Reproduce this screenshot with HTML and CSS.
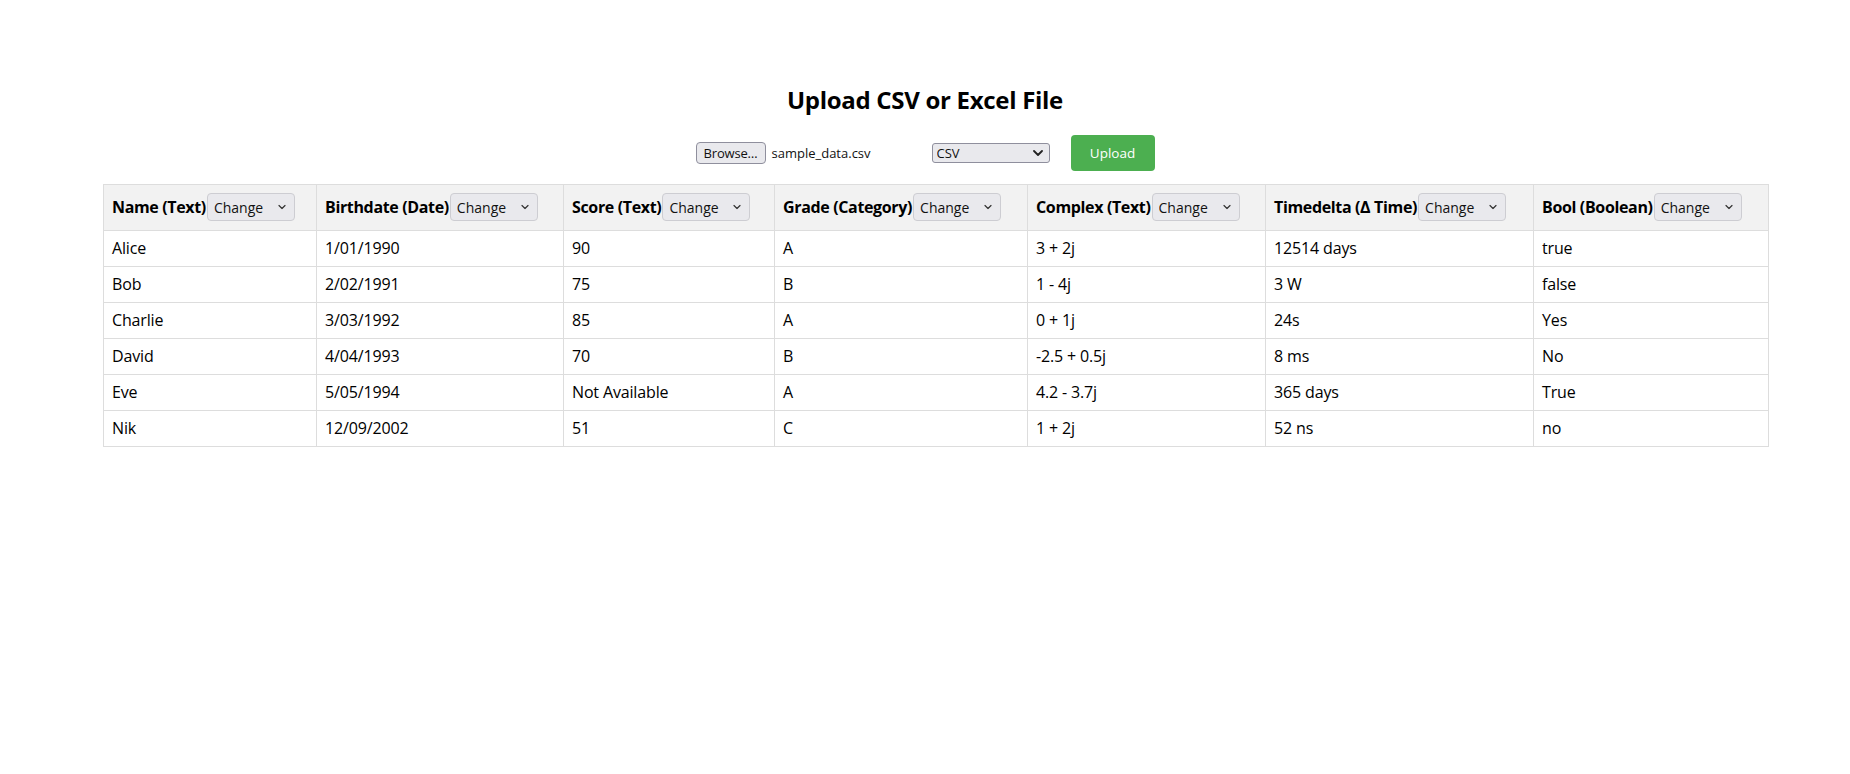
FILE: index.html
```html
<!DOCTYPE html>
<html lang="en">
<head>
<meta charset="utf-8">
<title>Upload CSV or Excel File</title>
<link rel="stylesheet" href="styles.css">
</head>
<body>
<header class="top">
  <h1 class="title">Upload CSV or Excel File</h1>
  <form class="controls">
    <div class="file-widget">
      <button type="button" class="browse">Browse…</button>
      <span class="file-name">sample_data.csv</span>
    </div>
    <span class="sel sel-type">
      <select class="type-select"><option>CSV</option><option>Excel</option></select>
      <svg class="chev chev-bold" width="10" height="6" viewBox="0 0 10 6"><path d="M1 1 L5 5 L9 1" fill="none" stroke="#222" stroke-width="1.8" stroke-linecap="round" stroke-linejoin="round"/></svg>
    </span>
    <button type="button" class="upload">Upload</button>
  </form>
</header>
<main class="data">
  <table class="grid">
    <colgroup>
      <col class="c1"><col class="c2"><col class="c3"><col class="c4"><col class="c5"><col class="c6"><col class="c7">
    </colgroup>
    <thead>
      <tr>
        <th><div class="th-in">Name (Text)<span class="sel"><select class="chg"><option>Change</option></select><svg class="chev" width="8" height="5" viewBox="0 0 8 5"><path d="M1 1 L4 4 L7 1" fill="none" stroke="#333" stroke-width="1.2" stroke-linecap="round" stroke-linejoin="round"/></svg></span></div></th>
        <th><div class="th-in">Birthdate (Date)<span class="sel"><select class="chg"><option>Change</option></select><svg class="chev" width="8" height="5" viewBox="0 0 8 5"><path d="M1 1 L4 4 L7 1" fill="none" stroke="#333" stroke-width="1.2" stroke-linecap="round" stroke-linejoin="round"/></svg></span></div></th>
        <th><div class="th-in">Score (Text)<span class="sel"><select class="chg"><option>Change</option></select><svg class="chev" width="8" height="5" viewBox="0 0 8 5"><path d="M1 1 L4 4 L7 1" fill="none" stroke="#333" stroke-width="1.2" stroke-linecap="round" stroke-linejoin="round"/></svg></span></div></th>
        <th><div class="th-in">Grade (Category)<span class="sel"><select class="chg"><option>Change</option></select><svg class="chev" width="8" height="5" viewBox="0 0 8 5"><path d="M1 1 L4 4 L7 1" fill="none" stroke="#333" stroke-width="1.2" stroke-linecap="round" stroke-linejoin="round"/></svg></span></div></th>
        <th><div class="th-in">Complex (Text)<span class="sel"><select class="chg"><option>Change</option></select><svg class="chev" width="8" height="5" viewBox="0 0 8 5"><path d="M1 1 L4 4 L7 1" fill="none" stroke="#333" stroke-width="1.2" stroke-linecap="round" stroke-linejoin="round"/></svg></span></div></th>
        <th><div class="th-in">Timedelta (Δ Time)<span class="sel"><select class="chg"><option>Change</option></select><svg class="chev" width="8" height="5" viewBox="0 0 8 5"><path d="M1 1 L4 4 L7 1" fill="none" stroke="#333" stroke-width="1.2" stroke-linecap="round" stroke-linejoin="round"/></svg></span></div></th>
        <th><div class="th-in">Bool (Boolean)<span class="sel"><select class="chg"><option>Change</option></select><svg class="chev" width="8" height="5" viewBox="0 0 8 5"><path d="M1 1 L4 4 L7 1" fill="none" stroke="#333" stroke-width="1.2" stroke-linecap="round" stroke-linejoin="round"/></svg></span></div></th>
      </tr>
    </thead>
    <tbody>
      <tr><td>Alice</td><td>1/01/1990</td><td>90</td><td>A</td><td>3 + 2j</td><td>12514 days</td><td>true</td></tr>
      <tr><td>Bob</td><td>2/02/1991</td><td>75</td><td>B</td><td>1 - 4j</td><td>3 W</td><td>false</td></tr>
      <tr><td>Charlie</td><td>3/03/1992</td><td>85</td><td>A</td><td>0 + 1j</td><td>24s</td><td>Yes</td></tr>
      <tr><td>David</td><td>4/04/1993</td><td>70</td><td>B</td><td>-2.5 + 0.5j</td><td>8 ms</td><td>No</td></tr>
      <tr><td>Eve</td><td>5/05/1994</td><td>Not Available</td><td>A</td><td>4.2 - 3.7j</td><td>365 days</td><td>True</td></tr>
      <tr><td>Nik</td><td>12/09/2002</td><td>51</td><td>C</td><td>1 + 2j</td><td>52 ns</td><td>no</td></tr>
    </tbody>
  </table>
</main>
</body>
</html>
```
FILE: styles.css
```css
* { box-sizing: border-box; }

html, body {
  margin: 0;
  padding: 0;
  background: #ffffff;
  color: #000000;
  font-family: "Open Sans", "Noto Sans", sans-serif;
}

.top {
  padding-top: 84px;
  display: flex;
  flex-direction: column;
  align-items: center;
}

.title {
  margin: 0;
  font-size: 24px;
  line-height: 32px;
  font-weight: 700;
  letter-spacing: -0.3px;
}

.controls {
  margin: 19px 0 0 0;
  display: flex;
  align-items: center;
  height: 36px;
}

.file-widget {
  width: 226px;
  display: flex;
  align-items: center;
}

.browse {
  width: 70px;
  height: 22px;
  padding: 0;
  font-family: inherit;
  font-size: 13px;
  line-height: 20px;
  letter-spacing: -0.2px;
  color: #111;
  background: #e9e9ed;
  border: 1px solid #8f8f9d;
  border-radius: 4px;
  white-space: nowrap;
}

.file-name {
  margin-left: 6px;
  font-size: 13px;
  color: #111;
}

.sel {
  position: relative;
  display: inline-flex;
  align-items: center;
}

.sel-type {
  margin-left: 10px;
}

.type-select {
  -webkit-appearance: none;
  appearance: none;
  width: 118px;
  height: 20px;
  padding: 0 20px 0 4px;
  font-family: inherit;
  font-size: 13px;
  line-height: 18px;
  color: #111;
  background: #e9e9ed;
  border: 1px solid #8f8f9d;
  border-radius: 3px;
}

.chev {
  position: absolute;
  right: 9px;
  top: 50%;
  transform: translateY(-50%);
  pointer-events: none;
}

.chev-bold {
  right: 7px;
}

.upload {
  margin-left: 21px;
  width: 84px;
  height: 36px;
  padding: 0;
  font-family: inherit;
  font-size: 13.5px;
  color: #ffffff;
  background: #4caf50;
  border: none;
  border-radius: 4px;
}

.data {
  padding: 13px 82px 0 103px;
}

.grid {
  width: 100%;
  border-collapse: collapse;
  table-layout: fixed;
  font-size: 16px;
}

.c1 { width: 213px; }
.c2 { width: 247px; }
.c3 { width: 211px; }
.c4 { width: 253px; }
.c5 { width: 238px; }
.c6 { width: 268px; }
.c7 { width: 235px; }

.grid th,
.grid td {
  border: 1px solid #dddddd;
  padding: 8px;
  text-align: left;
  vertical-align: middle;
  white-space: nowrap;
}

.grid th {
  background: #f2f2f2;
  font-weight: 700;
  height: 46px;
  line-height: 20px;
  padding-top: 8px;
  padding-bottom: 9px;
  letter-spacing: -0.35px;
}

.grid td {
  line-height: 19px;
  letter-spacing: -0.15px;
}

.th-in {
  display: flex;
  align-items: center;
  gap: 1px;
}

.chg {
  -webkit-appearance: none;
  appearance: none;
  width: 88px;
  height: 28px;
  padding: 0 18px 0 6px;
  font-family: inherit;
  font-size: 14px;
  font-weight: 400;
  letter-spacing: 0;
  color: #111;
  background: #e9e9ed;
  border: 1px solid #cdcdd2;
  border-radius: 4px;
}
```
